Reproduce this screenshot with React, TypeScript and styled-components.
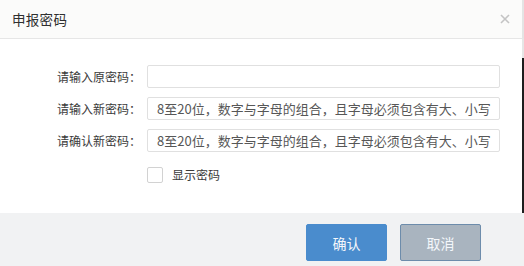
import React, { useState } from "react";
import styled, { createGlobalStyle } from "styled-components";

const GlobalStyle = createGlobalStyle`
  html, body {
    margin: 0;
    padding: 0;
    background: #ffffff;
  }
  body {
    font-family: "Noto Sans CJK SC", "Noto Sans", "Liberation Sans", sans-serif;
    color: #333;
  }
`;

const Dialog = styled.div`
  width: 524px;
  height: 266px;
  display: flex;
  flex-direction: column;
  background: #fff;
  overflow: hidden;
`;

const Header = styled.div`
  height: 38px;
  flex: none;
  display: flex;
  align-items: center;
  justify-content: space-between;
  padding: 0 10px 0 12px;
  background: #fbfbfa;
  border-bottom: 1px solid #e6e6e6;
  border-right: 2px solid #e4e4e4;
`;

const Title = styled.div`
  font-size: 13.5px;
  color: #2f2f2f;
  letter-spacing: 0.3px;
`;

const CloseButton = styled.button`
  width: 14px;
  height: 14px;
  padding: 0;
  border: none;
  background: transparent;
  display: flex;
  align-items: center;
  justify-content: center;
  cursor: pointer;
`;

const Body = styled.div`
  flex: 1;
  padding-top: 26px;
  border-right: 2px solid;
  border-image: linear-gradient(to bottom, #e6e6e6 20px, #1e1e1e 20px) 1;
`;

const Form = styled.div`
  display: grid;
  grid-template-columns: 141px 353px;
  column-gap: 6px;
  row-gap: 9px;
  align-items: center;
`;

const Label = styled.label`
  font-size: 12px;
  color: #3a3a3a;
  text-align: right;
  white-space: nowrap;
`;

const Input = styled.input`
  box-sizing: border-box;
  width: 100%;
  height: 23px;
  padding: 0 8px 0 9px;
  border: 1px solid #e0e0e0;
  border-radius: 2px;
  font-family: inherit;
  font-size: 13px;
  color: #555;
  background: #fff;
  outline: none;

  &::placeholder {
    color: #575757;
  }
`;

const CheckRow = styled.label`
  grid-column: 2;
  margin-top: 5px;
  display: flex;
  align-items: center;
  gap: 9px;
  font-size: 12px;
  color: #3a3a3a;
  cursor: pointer;
`;

const CheckBox = styled.span<{ checked: boolean }>`
  width: 14px;
  height: 14px;
  border: 1px solid #d2d2d2;
  border-radius: 2px;
  background: ${(p) => (p.checked ? "#4a8ccd" : "#fff")};
`;

const Footer = styled.div`
  height: 53px;
  flex: none;
  display: flex;
  justify-content: flex-end;
  align-items: flex-start;
  gap: 13px;
  padding: 11px 43px 0 0;
  background: #f1f2f3;
  box-sizing: border-box;
`;

const Button = styled.button<{ variant: "primary" | "cancel" }>`
  width: 81px;
  height: 37px;
  border-radius: 2px;
  font-family: inherit;
  font-size: 14px;
  color: #f4f7fb;
  cursor: pointer;
  background: ${(p) => (p.variant === "primary" ? "#4a8ccd" : "#a9b4bf")};
  border: 1px solid ${(p) => (p.variant === "primary" ? "#4a8ccd" : "#6d8cab")};
`;

const placeholder = "8至20位，数字与字母的组合，且字母必须包含有大、小写";

export default function App() {
  const [show, setShow] = useState(false);
  const type = show ? "text" : "password";

  return (
    <>
      <GlobalStyle />
      <Dialog>
        <Header>
          <Title>申报密码</Title>
          <CloseButton aria-label="关闭">
            <svg width="10" height="10" viewBox="0 0 10 10">
              <path d="M1 1L9 9M9 1L1 9" stroke="#c4c4c4" strokeWidth="1.6" />
            </svg>
          </CloseButton>
        </Header>
        <Body>
          <Form>
            <Label>请输入原密码：</Label>
            <Input type={type} />
            <Label>请输入新密码：</Label>
            <Input type={type} placeholder={placeholder} />
            <Label>请确认新密码：</Label>
            <Input type={type} placeholder={placeholder} />
            <CheckRow onClick={() => setShow(!show)}>
              <CheckBox checked={show} />
              显示密码
            </CheckRow>
          </Form>
        </Body>
        <Footer>
          <Button variant="primary">确认</Button>
          <Button variant="cancel">取消</Button>
        </Footer>
      </Dialog>
    </>
  );
}
